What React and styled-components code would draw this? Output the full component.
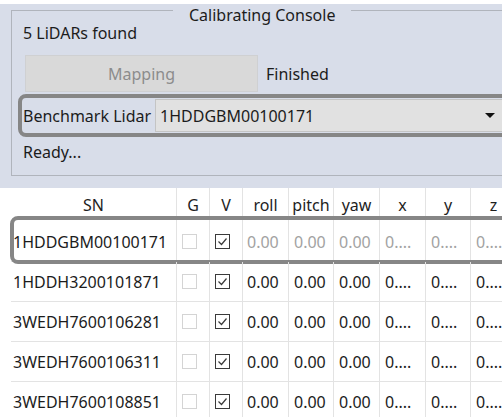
import React from 'react'
import styled, { createGlobalStyle } from 'styled-components'

const GlobalStyle = createGlobalStyle`
  html, body {
    margin: 0;
    padding: 0;
    overflow: hidden;
    background: #ffffff;
  }
  body {
    font-family: "Noto Sans", "Liberation Sans", sans-serif;
    font-size: 16px;
    color: #1c1c1c;
  }
`

const Screen = styled.div`
  width: 502px;
  height: 417px;
  overflow: hidden;
  background: #ffffff;
`

const Upper = styled.div`
  background: #d8dde9;
  border-top: 4px solid #ffffff;
  padding: 6px 0 12px 11px;
`

const GroupBox = styled.div`
  width: 508px;
  border: 1px solid #b0b4bc;
  border-top: none;
`

const GroupHead = styled.div`
  display: flex;
  height: 12px;
`

const Seg = styled.div`
  height: 0;
  border-top: 1px solid #b0b4bc;
  flex: ${p => (p.$grow ? '1' : `0 0 ${p.$w}px`)};
`

const GroupTitle = styled.div`
  margin-top: -6px;
  padding: 0 16px;
  line-height: 22px;
  white-space: nowrap;
`

const GroupBody = styled.div`
  display: flex;
  flex-direction: column;
  padding: 0 0 12px 11px;
`

const Line = styled.div`
  line-height: 22px;
  margin-top: ${p => p.$mt || 0}px;
`

const ButtonRow = styled.div`
  display: flex;
  align-items: center;
  height: 37px;
  margin-top: 11px;
`

const MapButton = styled.button`
  margin-left: 2px;
  width: 233px;
  height: 37px;
  border: 1px solid #cfd0d2;
  background: #d9d9d9;
  color: #8c8c8c;
  font: inherit;
  padding: 0;
`

const StatusText = styled.span`
  margin-left: 8px;
`

const ComboRow = styled.div`
  position: relative;
  display: flex;
  align-items: center;
  height: 33px;
  margin-top: 7px;

  &::after {
    content: '';
    position: absolute;
    top: -5px;
    bottom: -5px;
    left: -5px;
    right: -12px;
    border: 4px solid #868686;
    border-radius: 8px;
    pointer-events: none;
  }
`

const ComboLabel = styled.span`
  white-space: nowrap;
`

const ComboField = styled.div`
  flex: 1;
  display: flex;
  align-items: center;
  justify-content: space-between;
  height: 31px;
  margin-left: 4px;
  padding: 0 24px 0 4px;
  background: #e1e1e1;
  border: 1px solid #c4c4c4;
`

const Arrow = styled.span`
  width: 0;
  height: 0;
  border-left: 5px solid transparent;
  border-right: 5px solid transparent;
  border-top: 5px solid #111111;
`

const TableArea = styled.div`
  padding-left: 11px;
  background: #ffffff;
`

const cols = '166px 33px 33px 46px 45px 46px 46px 45px 46px'

const HeadRow = styled.div`
  display: grid;
  grid-template-columns: ${cols};
  height: 34px;
`

const HeadCell = styled.div`
  display: flex;
  align-items: center;
  justify-content: center;
  border-right: 1px solid #e3e3e3;
  color: #1e1e1e;
`

const Row = styled.div`
  position: relative;
  display: grid;
  grid-template-columns: ${cols};
  height: 40px;
  box-sizing: border-box;
  border-bottom: 1px solid #e3e3e3;

  ${p => p.$marked && `
    &::after {
      content: '';
      position: absolute;
      top: -6px;
      bottom: -3px;
      left: -1px;
      right: -12px;
      border: 4px solid #868686;
      border-radius: 8px;
      pointer-events: none;
    }
  `}
`

const Cell = styled.div`
  display: flex;
  align-items: center;
  padding-left: ${p => p.$pad ?? 5}px;
  border-right: 1px solid #e3e3e3;
  white-space: nowrap;
  overflow: hidden;
  color: ${p => (p.$dim ? '#a2a2a2' : '#1c1c1c')};
`

const Box = styled.span`
  display: inline-flex;
  align-items: center;
  justify-content: center;
  width: 15px;
  height: 15px;
  box-sizing: border-box;
  border: 1px solid ${p => (p.$checked ? '#3a3a3a' : '#d4d4d4')};
  background: #ffffff;
`

const Check = ({ checked }) => (
  <Box $checked={checked}>
    {checked && (
      <svg width="13" height="13" viewBox="0 0 13 13">
        <polyline points="2.5,6.5 5.5,9.5 10.5,3.5" fill="none" stroke="#3a3a3a" strokeWidth="1.2" />
      </svg>
    )}
  </Box>
)

const headers = ['SN', 'G', 'V', 'roll', 'pitch', 'yaw', 'x', 'y', 'z']

const lidars = [
  { sn: '1HDDGBM00100171', bench: true },
  { sn: '1HDDH3200101871' },
  { sn: '3WEDH7600106281' },
  { sn: '3WEDH7600106311' },
  { sn: '3WEDH7600108851' },
]

export default function App() {
  return (
    <Screen>
      <GlobalStyle />
      <Upper>
        <GroupBox>
          <GroupHead>
            <Seg $w={161} />
            <GroupTitle>Calibrating Console</GroupTitle>
            <Seg $grow />
          </GroupHead>
          <GroupBody>
            <Line>5 LiDARs found</Line>
            <ButtonRow>
              <MapButton disabled>Mapping</MapButton>
              <StatusText>Finished</StatusText>
            </ButtonRow>
            <ComboRow>
              <ComboLabel>Benchmark Lidar</ComboLabel>
              <ComboField>
                <span>1HDDGBM00100171</span>
                <Arrow />
              </ComboField>
            </ComboRow>
            <Line $mt={9}>Ready...</Line>
          </GroupBody>
        </GroupBox>
      </Upper>
      <TableArea>
        <HeadRow>
          {headers.map(h => (
            <HeadCell key={h}>{h}</HeadCell>
          ))}
        </HeadRow>
        {lidars.map(l => (
          <Row key={l.sn} $marked={l.bench}>
            <Cell $pad={2}>{l.sn}</Cell>
            <Cell><Check checked={false} /></Cell>
            <Cell><Check checked /></Cell>
            <Cell $pad={4} $dim={l.bench}>0.00</Cell>
            <Cell $dim={l.bench}>0.00</Cell>
            <Cell $dim={l.bench}>0.00</Cell>
            <Cell $dim={l.bench}>0....</Cell>
            <Cell $dim={l.bench}>0....</Cell>
            <Cell $dim={l.bench}>0....</Cell>
          </Row>
        ))}
      </TableArea>
    </Screen>
  )
}
